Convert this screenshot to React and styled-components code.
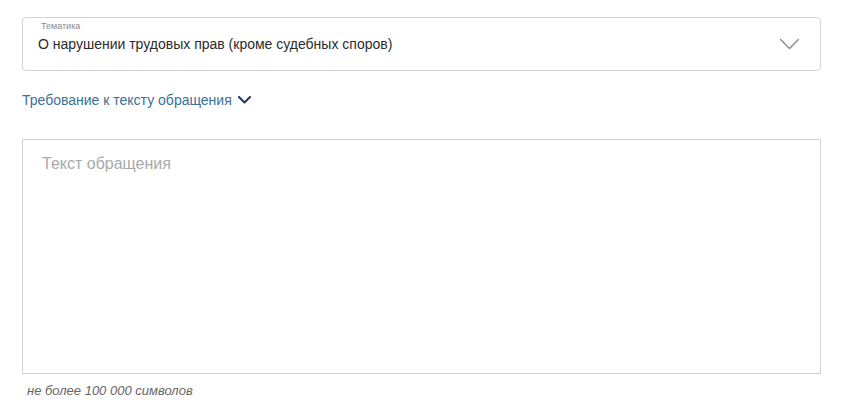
import React from "react";
import styled, { createGlobalStyle } from "styled-components";

const GlobalStyle = createGlobalStyle`
  html, body {
    margin: 0;
    padding: 0;
    background: #fff;
    font-family: "Liberation Sans", Arial, sans-serif;
  }
`;

const Page = styled.div`
  display: flex;
  flex-direction: column;
  padding: 17px 20px 0 22px;
  width: 841px;
  box-sizing: border-box;
`;

const Select = styled.div`
  display: flex;
  align-items: flex-start;
  justify-content: space-between;
  height: 54px;
  box-sizing: border-box;
  border: 1px solid #d3d3d3;
  border-radius: 4px;
  padding: 0 20px 0 15px;
`;

const SelectBody = styled.div`
  display: flex;
  flex-direction: column;
  padding-top: 3px;
`;

const Label = styled.div`
  font-size: 9px;
  color: #8a8a8a;
  margin-left: 3px;
  line-height: 11px;
`;

const Value = styled.div`
  font-size: 14px;
  color: #2b2b2b;
  line-height: 18px;
  margin-top: 3px;
`;

const ChevronSlot = styled.div`
  display: flex;
  align-self: center;
`;

const Toggle = styled.div`
  display: flex;
  align-items: center;
  gap: 6px;
  margin-top: 20px;
  font-size: 14px;
  color: #3b6f96;
  line-height: 18px;
`;

const TextBox = styled.div`
  margin-top: 30px;
  height: 235px;
  box-sizing: border-box;
  border: 1px solid #d3d3d3;
  padding: 14px 19px;
`;

const Placeholder = styled.div`
  font-size: 16px;
  color: #a9a9a9;
  line-height: 20px;
`;

const Hint = styled.div`
  margin: 9px 0 0 5px;
  font-size: 13px;
  font-style: italic;
  color: #666;
`;

const Chevron = ({ color, stroke, size }) => (
  <svg width={size} height={size * 0.6} viewBox="0 0 20 12" fill="none">
    <path d="M1.5 1.5 L10 10 L18.5 1.5" stroke={color} strokeWidth={stroke} strokeLinecap="round" strokeLinejoin="round" />
  </svg>
);

export default function App() {
  return (
    <>
      <GlobalStyle />
      <Page>
        <Select>
          <SelectBody>
            <Label>Тематика</Label>
            <Value>О нарушении трудовых прав (кроме судебных споров)</Value>
          </SelectBody>
          <ChevronSlot>
            <Chevron color="#8c8c8c" stroke={1.4} size={21} />
          </ChevronSlot>
        </Select>
        <Toggle>
          Требование к тексту обращения
          <Chevron color="#1e3d63" stroke={3.2} size={13} />
        </Toggle>
        <TextBox>
          <Placeholder>Текст обращения</Placeholder>
        </TextBox>
        <Hint>не более 100 000 символов</Hint>
      </Page>
    </>
  );
}
